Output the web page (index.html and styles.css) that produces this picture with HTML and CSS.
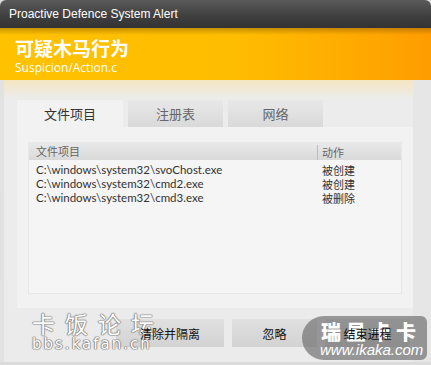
FILE: index.html
```html
<!DOCTYPE html>
<html lang="zh-CN">
<head>
  <meta charset="UTF-8">
  <title>Proactive Defence System Alert</title>
  <link rel="stylesheet" href="styles.css">
</head>
<body>
  <div class="window">
    <div class="titlebar">Proactive Defence System Alert</div>

    <div class="banner">
      <div class="banner-title">可疑木马行为</div>
      <div class="banner-sub">Suspicion/Action.c</div>
    </div>

    <div class="content">
      <div class="tabs">
        <div class="tab active">文件项目</div>
        <div class="tab">注册表</div>
        <div class="tab">网络</div>
      </div>

      <div class="panel">
        <div class="list">
          <div class="list-head">
            <span class="col-file">文件项目</span>
            <span class="col-action">动作</span>
          </div>
          <div class="row">
            <span class="col-file">C:\windows\system32\svoChost.exe</span>
            <span class="col-action">被创建</span>
          </div>
          <div class="row">
            <span class="col-file">C:\windows\system32\cmd2.exe</span>
            <span class="col-action">被创建</span>
          </div>
          <div class="row">
            <span class="col-file">C:\windows\system32\cmd3.exe</span>
            <span class="col-action">被删除</span>
          </div>
        </div>
      </div>

      <div class="actions">
        <button class="btn btn-wide"><span class="btn-label">清除并隔离</span></button>
        <button class="btn"><span class="btn-label">忽略</span></button>
        <button class="btn"><span class="btn-label">结束进程</span></button>
      </div>
    </div>

    <!-- watermarks from the screenshot source -->
    <div class="mark-kafan">
      <div class="mark-kafan-name">卡饭论坛</div>
      <div class="mark-kafan-url">bbs.kafan.cn</div>
    </div>
    <div class="mark-ikaka">
      <div class="mark-ikaka-name">瑞星卡卡</div>
      <div class="mark-ikaka-url">www.ikaka.com</div>
    </div>
  </div>
</body>
</html>
```

FILE: styles.css
```css
html, body {
  margin: 0;
  padding: 0;
  background-color: #dcdcdc;
}

body {
  font-family: "Lato", "Noto Sans CJK SC", sans-serif;
  width: 431px;
  height: 365px;
  overflow: hidden;
}

.window {
  position: relative;
  width: 431px;
  height: 362px;
  background-color: #ebebeb;
  border-radius: 6px 6px 0 0;
  overflow: hidden;
}

.titlebar {
  height: 28px;
  line-height: 28px;
  padding-left: 9px;
  font-family: "Liberation Sans", "Noto Sans CJK SC", sans-serif;
  font-size: 12px;
  color: #fff;
  background: linear-gradient(to bottom, #5a5a5a 0%, #3e3e3e 60%, #333 100%);
}

.banner {
  position: relative;
  height: 52px;
  padding-left: 15px;
  box-sizing: border-box;
  padding-top: 8px;
  color: #fff;
  background: linear-gradient(to right, #ffc200 0%, #ffbd00 55%, #ffa800 85%, #ff9c00 100%);
}

.banner::before {
  content: "";
  position: absolute;
  left: 0;
  right: 0;
  top: 0;
  height: 7px;
  background: linear-gradient(to bottom, rgba(90, 60, 0, 0.35), rgba(90, 60, 0, 0));
}

.banner-title {
  font-family: "Noto Sans CJK SC", sans-serif;
  font-size: 19px;
  font-weight: bold;
  line-height: 24px;
}

.banner-sub {
  font-family: "Open Sans", sans-serif;
  font-size: 12px;
  line-height: 14px;
  margin-top: 1px;
}

.content {
  padding-top: 20px;
  background: linear-gradient(to bottom, #f6e6c0 0px, #ececec 18px, #ebebeb 100%);
  height: 282px;
  box-sizing: border-box;
  box-shadow: inset -18px 0 0 #e6e6e6, inset 4px 0 0 #e2e2e2;
}

.tabs {
  display: flex;
  gap: 5px;
  margin-left: 17px;
  height: 27px;
}

.tab {
  width: 95px;
  font-family: "Noto Sans CJK SC", sans-serif;
  font-size: 13px;
  line-height: 27px;
  text-align: center;
  color: #666;
  background: linear-gradient(to bottom, #e8e8e8, #d9d9d9);
}

.tab.active {
  width: 106px;
  color: #333;
  background: #f2f2f2;
}

.panel {
  margin-left: 17px;
  width: 396px;
  height: 181px;
  box-sizing: border-box;
  padding: 15px 11px 14px;
  background-color: #f2f2f2;
}

.list {
  height: 152px;
  background-color: #f5f5f5;
  border: 1px solid #e8e8e8;
  box-sizing: border-box;
}

.list-head {
  display: flex;
  height: 17px;
  line-height: 17px;
  color: #666;
  font-size: 11px;
  background: linear-gradient(to bottom, #e9e9e9, #d9d9d9);
  margin-bottom: 3px;
}

.list-head .col-action {
  border-left: 1px solid #bcbcbc;
  line-height: 12px;
  margin-top: 2px;
  padding-top: 1px;
  padding-left: 4px;
}

.row {
  display: flex;
  font-size: 11.5px;
  line-height: 14px;
  color: #333;
}

.col-file {
  width: 281px;
  padding-left: 7px;
}

.col-action {
  font-family: "Noto Sans CJK SC", sans-serif;
  font-size: 11px;
  padding-left: 5px;
}

.list-head .col-file {
  font-family: "Noto Sans CJK SC", sans-serif;
}

.actions {
  display: flex;
  justify-content: flex-end;
  gap: 8px;
  padding-right: 21px;
  margin-top: 11px;
}

.btn {
  width: 85px;
  height: 28px;
  border: none;
  padding: 0;
  font-family: "Noto Sans CJK SC", sans-serif;
  font-size: 12px;
  color: #111;
  background: linear-gradient(to bottom, #e0e0e0, #d2d2d2);
}

.btn-wide {
  width: 108px;
}

/* labels sit above the watermarks, as in the capture */
.btn-label {
  position: relative;
  z-index: 2;
}

.mark-kafan {
  position: absolute;
  z-index: 1;
  left: 32px;
  top: 310px;
  color: #fff;
  text-shadow: 0 0 1px #7a7a7a, 0 0 1px #7a7a7a, 0 0 1px #7a7a7a, 0 0 1px #7a7a7a, 0 0 2px #9a9a9a;
}

.mark-kafan-name {
  font-family: "Noto Sans CJK SC", sans-serif;
  font-size: 23px;
  letter-spacing: 10px;
  line-height: 27px;
}

.mark-kafan-url {
  font-family: "DejaVu Sans", sans-serif;
  font-size: 15px;
  letter-spacing: 2px;
  line-height: 15px;
}

.mark-ikaka {
  position: absolute;
  z-index: 1;
  left: 302px;
  top: 316px;
  width: 125px;
  height: 44px;
  box-sizing: border-box;
  padding-left: 19px;
  border-radius: 22px 6px 6px 22px;
  background: rgba(105, 105, 105, 0.65);
  color: #fff;
}

.mark-ikaka-name {
  font-family: "Noto Sans CJK SC", sans-serif;
  font-size: 20px;
  font-weight: 900;
  letter-spacing: 5px;
  line-height: 20px;
  margin-top: 6px;
}

.mark-ikaka-url {
  font-family: "Liberation Sans", sans-serif;
  font-style: italic;
  font-size: 15px;
  line-height: 16px;
  margin-left: -1px;
}
```
